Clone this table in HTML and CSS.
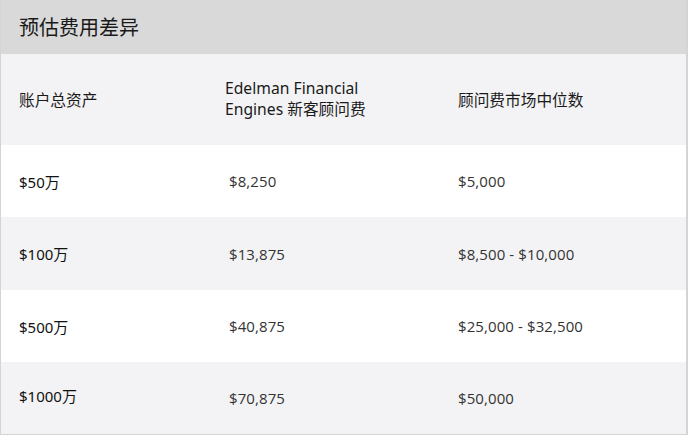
FILE: index.html
```html
<!DOCTYPE html>
<html lang="zh-CN">
<head>
<meta charset="utf-8">
<title>预估费用差异</title>
<link rel="stylesheet" href="styles.css">
</head>
<body>
<div class="card">
  <div class="title">预估费用差异</div>
  <div class="row head">
    <div class="c1">账户总资产</div>
    <div class="c2 hd">Edelman Financial<br>Engines 新客顾问费</div>
    <div class="c3">顾问费市场中位数</div>
  </div>
  <div class="row white">
    <div class="c1">$50万</div>
    <div class="c2 num">$8,250</div>
    <div class="c3 num">$5,000</div>
  </div>
  <div class="row grey mid">
    <div class="c1">$100万</div>
    <div class="c2 num">$13,875</div>
    <div class="c3 num">$8,500 - $10,000</div>
  </div>
  <div class="row white">
    <div class="c1">$500万</div>
    <div class="c2 num">$40,875</div>
    <div class="c3 num">$25,000 - $32,500</div>
  </div>
  <div class="row grey">
    <div class="c1 up">$1000万</div>
    <div class="c2 num">$70,875</div>
    <div class="c3 num">$50,000</div>
  </div>
</div>
</body>
</html>
```

FILE: styles.css
```css
html, body {
  margin: 0;
  padding: 0;
  background: #ffffff;
}
.card {
  width: 685px;
  border: 1px solid #d4d4d4;
  border-right-width: 2px;
  border-top: none;
  font-family: "Noto Sans", "Noto Sans CJK SC", sans-serif;
  color: #111;
}
.title {
  height: 54px;
  background: #d9d9d9;
  display: flex;
  align-items: center;
  padding-left: 18px;
  padding-bottom: 2px;
  box-sizing: border-box;
  font-family: "Noto Sans CJK SC", sans-serif;
  font-size: 20px;
  color: #1a1a1a;
}
.row {
  display: grid;
  grid-template-columns: 206px 233px 1fr;
  align-items: center;
  height: 72px;
  padding-left: 18px;
  box-sizing: border-box;
}
.row.head {
  height: 91px;
  background: #f3f3f5;
}
.row.white { background: #ffffff; }
.row.grey { background: #f3f3f5; }
.row.mid { height: 73px; }
.c1 {
  font-family: "Noto Sans", "Noto Sans CJK SC", sans-serif;
  font-size: 15px;
  color: #111;
}
.c1.up { margin-top: -6px; }
.head .c1, .head .c3 {
  font-family: "Noto Sans CJK SC", sans-serif;
  font-size: 15.7px;
  color: #1a1a1a;
}
.hd {
  font-family: "Noto Sans", "Noto Sans CJK SC", sans-serif;
  font-size: 15.7px;
  line-height: 21px;
  color: #1a1a1a;
  margin-top: -2px;
}
.num {
  font-family: "Open Sans", sans-serif;
  font-size: 15px;
  color: #333;
  letter-spacing: 0.1px;
}
.c2.num { padding-left: 4px; }
```
